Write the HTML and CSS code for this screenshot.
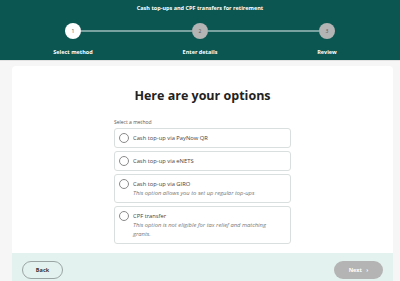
FILE: index.html
```html
<!DOCTYPE html>
<html lang="en">
<head>
    <meta charset="UTF-8">
    <title>Cash top-ups and CPF transfers for retirement</title>
    <link rel="stylesheet" href="styles.css">
</head>
<body>

<div class="header">
    <div class="header-title">Cash top-ups and CPF transfers for retirement</div>
    <div class="stepper">
        <div class="step active">
            <div class="step-circle">1</div>
            <div class="step-label">Select method</div>
        </div>
        <div class="step-line"></div>
        <div class="step">
            <div class="step-circle">2</div>
            <div class="step-label">Enter details</div>
        </div>
        <div class="step-line"></div>
        <div class="step">
            <div class="step-circle">3</div>
            <div class="step-label">Review</div>
        </div>
    </div>
</div>

<div class="page">
    <div class="card">
        <h1 class="card-title">Here are your options</h1>
        <div class="options">
            <div class="options-label">Select a method</div>
            <label class="option">
                <span class="radio"></span>
                <span class="option-text">
                    <span class="option-name">Cash top-up via PayNow QR</span>
                </span>
            </label>
            <label class="option">
                <span class="radio"></span>
                <span class="option-text">
                    <span class="option-name">Cash top-up via eNETS</span>
                </span>
            </label>
            <label class="option">
                <span class="radio"></span>
                <span class="option-text">
                    <span class="option-name">Cash top-up via GIRO</span>
                    <span class="option-desc">This option allows you to set up regular top-ups</span>
                </span>
            </label>
            <label class="option">
                <span class="radio"></span>
                <span class="option-text">
                    <span class="option-name">CPF transfer</span>
                    <span class="option-desc">This option is not eligible for tax relief and matching grants.</span>
                </span>
            </label>
        </div>
        <div class="card-footer">
            <button class="btn btn-back">Back</button>
            <button class="btn btn-next" disabled>Next <span class="chevron">&#8250;</span></button>
        </div>
    </div>
</div>

</body>
</html>
```

FILE: styles.css
```css
body {
    margin: 0;
    font-family: "Open Sans", Lato, sans-serif;
    background-color: #f6f6f6;
    color: #333;
}
.header {
    background-color: #0c5652;
    color: white;
    height: 61px;
    border-bottom: 1px solid #e2e2e2;
    padding-top: 5px;
    box-sizing: border-box;
}
.header-title {
    text-align: center;
    font-size: 5.5px;
    font-weight: bold;
    height: 8px;
    line-height: 6px;
}
.stepper {
    display: flex;
    align-items: flex-start;
    margin-top: 10px;
    padding: 0 61px 0 61px;
}
.step {
    width: 24px;
    display: flex;
    flex-direction: column;
    align-items: center;
}
.step-circle {
    width: 16px;
    height: 16px;
    border-radius: 50%;
    background-color: #b4b4b4;
    color: #555;
    font-size: 5px;
    line-height: 16px;
    text-align: center;
}
.step.active .step-circle {
    background-color: white;
    color: #0c5652;
}
.step-label {
    margin-top: 9px;
    font-size: 5.5px;
    font-weight: bold;
    white-space: nowrap;
}
.step-line {
    flex: 1;
    height: 2px;
    background-color: #78a29f;
    margin: 7px -4px 0 -4px;
}
.page {
    padding: 5px 7px 0 12px;
}
.card {
    background-color: white;
    border-radius: 4px 4px 0 0;
}
.card-title {
    margin: 0;
    padding-top: 21px;
    text-align: center;
    font-size: 12.5px;
    font-weight: bold;
    color: #222;
}
.options {
    width: 177px;
    margin: 15px auto 0 auto;
    padding-bottom: 6px;
}
.options-label {
    font-size: 5px;
    color: #555;
    margin-bottom: 3px;
}
.option {
    display: flex;
    align-items: flex-start;
    border: 1px solid #d9dfde;
    border-radius: 3px;
    padding: 4px 10px 4px 4px;
    margin-bottom: 3px;
}
.radio {
    width: 8px;
    height: 8px;
    border: 1px solid #8a8a8a;
    border-radius: 50%;
    margin-right: 4px;
    flex-shrink: 0;
}
.option-text {
    display: flex;
    flex-direction: column;
    font-size: 5.8px;
    line-height: 10px;
}
.option-name {
    color: #444;
}
.option-desc {
    font-style: italic;
    color: #777;
    line-height: 9px;
}
.card-footer {
    display: flex;
    justify-content: space-between;
    align-items: center;
    background-color: #e3f2ef;
    padding: 8px 10px 4px 10px;
}
.btn {
    height: 18px;
    border-radius: 9px;
    font-family: "Open Sans", sans-serif;
    font-size: 5.5px;
    font-weight: bold;
    padding: 0;
}
.btn-back {
    width: 41px;
    background-color: transparent;
    border: 1px solid #9aa5a3;
    color: #333;
}
.btn-next {
    width: 49px;
    background-color: #b4b4b4;
    border: none;
    color: white;
}
.chevron {
    margin-left: 3px;
}
```
